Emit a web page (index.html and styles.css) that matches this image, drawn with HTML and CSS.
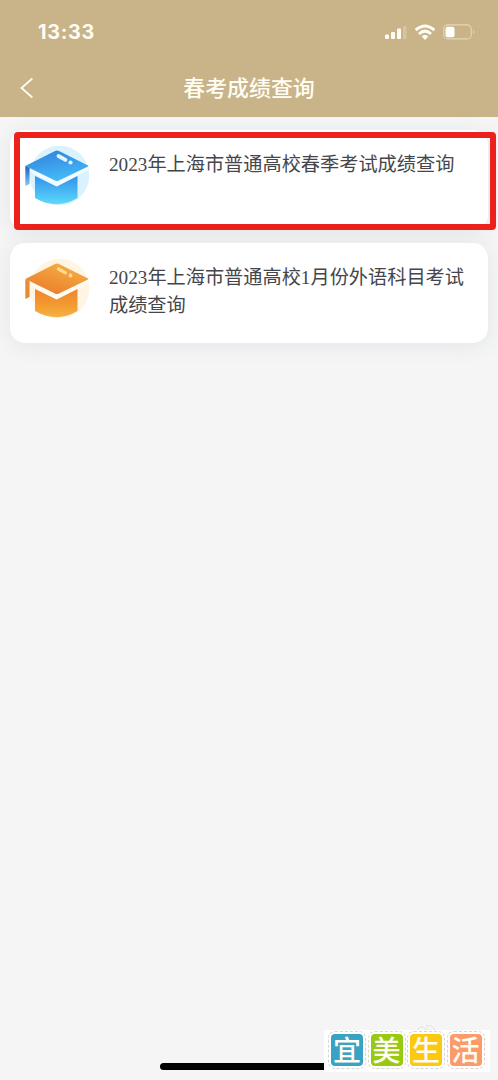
FILE: index.html
```html
<!DOCTYPE html>
<html lang="zh-CN">
<head>
<meta charset="utf-8">
<title>春考成绩查询</title>
<link rel="stylesheet" href="styles.css">
</head>
<body>
<div class="screen">
  <header class="header">
    <div class="status">
      <span class="time">13:33</span>
      <div class="indicators">
        <svg class="signal" width="22" height="16" viewBox="0 0 22 16" fill="#fffdf4">
          <rect x="0" y="10.500" width="4" height="4.500" rx="1"/>
          <rect x="6" y="8" width="4" height="7" rx="1"/>
          <rect x="12" y="4.500" width="4" height="10.500" rx="1"/>
          <rect x="18" y="2" width="3.500" height="13" rx="1" opacity=".22"/>
        </svg>
        <svg class="wifi" width="22" height="17" viewBox="0 0 22 17" fill="none" stroke="#fffdf4" stroke-width="2.900">
          <path d="M1.700 6.200Q11-2.200 20.300 6.200"/>
          <path d="M5 10Q11 4.300 17 10"/>
          <path d="M7.600 12.300Q11 9.700 14.400 12.300L11 15.900Z" fill="#fffdf4" stroke="none"/>
        </svg>
        <svg class="battery" width="33" height="16" viewBox="0 0 33 16">
          <rect x=".7" y=".9" width="27.600" height="14" rx="4" fill="none" stroke="#efe2bd" stroke-width="1.100" opacity=".75"/>
          <rect x="2.500" y="2.700" width="9" height="10.500" rx="2" fill="#fff"/>
          <path d="M30.300 5.800Q32.400 8 30.300 10.200Z" fill="#efe2bd" opacity=".8"/>
        </svg>
      </div>
    </div>
    <div class="navbar">
      <svg class="back" width="14" height="22" viewBox="0 0 14 22" fill="none" stroke="#fffdf4" stroke-width="1.700">
        <path d="M12.300 1.500L1.500 11L12.300 20.500"/>
      </svg>
      <h1 class="title">春考成绩查询</h1>
    </div>
  </header>
  <main class="list">
    <article class="card">
      <svg class="cap" width="68" height="64" viewBox="0 0 68 64">
        <defs>
          <linearGradient id="blueTop" x1=".2" y1="0" x2=".5" y2="1"><stop stop-color="#3283df"/><stop offset=".5" stop-color="#3b9eea"/><stop offset="1" stop-color="#43bdf8"/></linearGradient>
          <linearGradient id="blueBase" x1="0" y1="0" x2="0" y2="1"><stop stop-color="#3190ed"/><stop offset="1" stop-color="#5ed9fa"/></linearGradient>
          <linearGradient id="blueTassel" x1="0" y1="0" x2="0" y2="1"><stop stop-color="#165ec4"/><stop offset="1" stop-color="#8cc8f6"/></linearGradient>
        </defs>
        <circle cx="37.500" cy="30.500" r="29.800" fill="#d9f2fd"/>
        <path d="M13 31L34.500 41.500L55.500 31V53Q34.500 65.500 13 53Z" fill="url(#blueBase)"/>
        <path d="M7 23L35 38.500L66 22" fill="none" stroke="#f5fcff" stroke-width="5"/>
        <path d="M3.300 21L33 6Q35 5 37 6L66 20.500Q67 21 66 21.500L37 35.500Q35 36.500 33 35.500Z" fill="url(#blueTop)"/>
        <path d="M3.300 21L7.600 23V39L3.300 41Z" fill="url(#blueTassel)"/>
        <path d="M36.500 11L43.500 14.800" stroke="#e0f7ff" stroke-width="3.800" stroke-linecap="round"/>
        <circle cx="48.500" cy="17.500" r="2.100" fill="#e0f7ff"/>
      </svg>
      <p class="label">2023年上海市普通高校春季考试成绩查询</p>
      <div class="highlight"></div>
    </article>
    <article class="card">
      <svg class="cap" width="68" height="64" viewBox="0 0 68 64">
        <defs>
          <linearGradient id="goldTop" x1="0" y1="1" x2=".6" y2="0"><stop stop-color="#e9792d"/><stop offset=".5" stop-color="#ee9135"/><stop offset="1" stop-color="#f6ab42"/></linearGradient>
          <linearGradient id="goldBase" x1="0" y1="0" x2="0" y2="1"><stop stop-color="#ee862e"/><stop offset=".6" stop-color="#f39b31"/><stop offset="1" stop-color="#f6b445"/></linearGradient>
        </defs>
        <circle cx="37.500" cy="30.500" r="29.800" fill="#fff5e2"/>
        <path d="M13 31L34.500 41.500L55.500 31V53Q34.500 65.500 13 53Z" fill="url(#goldBase)"/>
        <path d="M7 23L35 38.500L66 22" fill="none" stroke="#fffcf4" stroke-width="5"/>
        <path d="M3.300 21L33 6Q35 5 37 6L66 20.500Q67 21 66 21.500L37 35.500Q35 36.500 33 35.500Z" fill="url(#goldTop)"/>
        <path d="M3.300 21L7.600 23V39L3.300 41Z" fill="#e98b32"/>
        <path d="M36.500 11L43.500 14.800" stroke="#ffdc93" stroke-width="3.200" stroke-linecap="round"/>
        <circle cx="48.500" cy="17.500" r="1.900" fill="#ffdc93"/>
      </svg>
      <p class="label">2023年上海市普通高校1月份外语科目考试成绩查询</p>
    </article>
  </main>
  <div class="home-bar"></div>
  <svg class="swirl" width="20" height="8" viewBox="0 0 20 8" fill="none" stroke="#dedede" stroke-dasharray="3 1">
    <path d="M1 6Q3 1 7 4Q9 7 11 3M9 2Q15 0 18 6"/>
  </svg>
  <div class="brand">
    <span class="tile blue">宜</span>
    <span class="tile green">美</span>
    <span class="tile yellow">生</span>
    <span class="tile orange">活</span>
  </div>
</div>
</body>
</html>
```
FILE: styles.css
```css
* { box-sizing: border-box; }
body { margin: 0; }
.screen {
  position: relative;
  width: 498px;
  height: 1080px;
  overflow: hidden;
  background: #f5f5f5;
  font-family: "Liberation Sans", "Noto Sans CJK SC", sans-serif;
}
.header {
  height: 117px;
  background: #c9b48a;
  color: #fffdf4;
}
.status {
  height: 62px;
  padding: 2px 22px 0 38px;
  display: flex;
  align-items: center;
  justify-content: space-between;
}
.time {
  font: 700 19.800px/24px Inter, sans-serif;
  letter-spacing: .7px;
}
.indicators { display: flex; align-items: center; }
.wifi { margin-left: 7px; }
.battery { margin-left: 7px; }
.navbar {
  position: relative;
  height: 54px;
  display: flex;
  align-items: center;
  justify-content: center;
}
.back { position: absolute; left: 20px; top: 15px; }
.title {
  margin: 0;
  font-size: 21.900px;
  line-height: 30px;
  font-weight: 500;
}
.list {
  padding: 13px 10px 0;
  display: flex;
  flex-direction: column;
  gap: 13px;
}
.card {
  position: relative;
  height: 100px;
  padding: 15px 14px 0 12px;
  display: flex;
  align-items: flex-start;
  background: #fff;
  border-radius: 15px;
  box-shadow: 0 3px 20px rgba(80, 105, 145, .11);
}
.cap { flex: none; }
.label {
  margin: 6px 0 0 19px;
  color: #45464b;
  font: 19.200px/28px "Liberation Serif", "Noto Sans CJK SC", serif;
}
.highlight {
  position: absolute;
  left: 4px;
  top: 2px;
  width: 482px;
  height: 98px;
  border: 6px solid #ec211c;
  border-radius: 4px;
}
.home-bar {
  position: absolute;
  left: 160px;
  top: 1063px;
  width: 178px;
  height: 7px;
  border-radius: 4px;
  background: #000;
}
.swirl {
  position: absolute;
  left: 417px;
  top: 1024px;
}
.brand {
  position: absolute;
  left: 324px;
  top: 1030px;
  width: 166px;
  height: 42px;
  padding: 1px 4px;
  display: flex;
  align-items: flex-start;
  gap: 1.500px;
  background: #fff;
}
.tile {
  width: 38px;
  height: 38px;
  padding: 2px;
  border: 1px dashed;
  border-radius: 7px;
  background-clip: content-box;
  color: #fffdf4;
  font: 500 28px/30px "Noto Sans CJK SC", sans-serif;
  text-align: center;
}
.blue { background-color: #38a3c4; border-color: #c9dcd4; }
.green { background-color: #99ca12; border-color: #d5dcc4; }
.yellow { background-color: #fbc910; border-color: #cfd6de; }
.orange { background-color: #fb9b69; border-color: #e3cfc4; }
```
